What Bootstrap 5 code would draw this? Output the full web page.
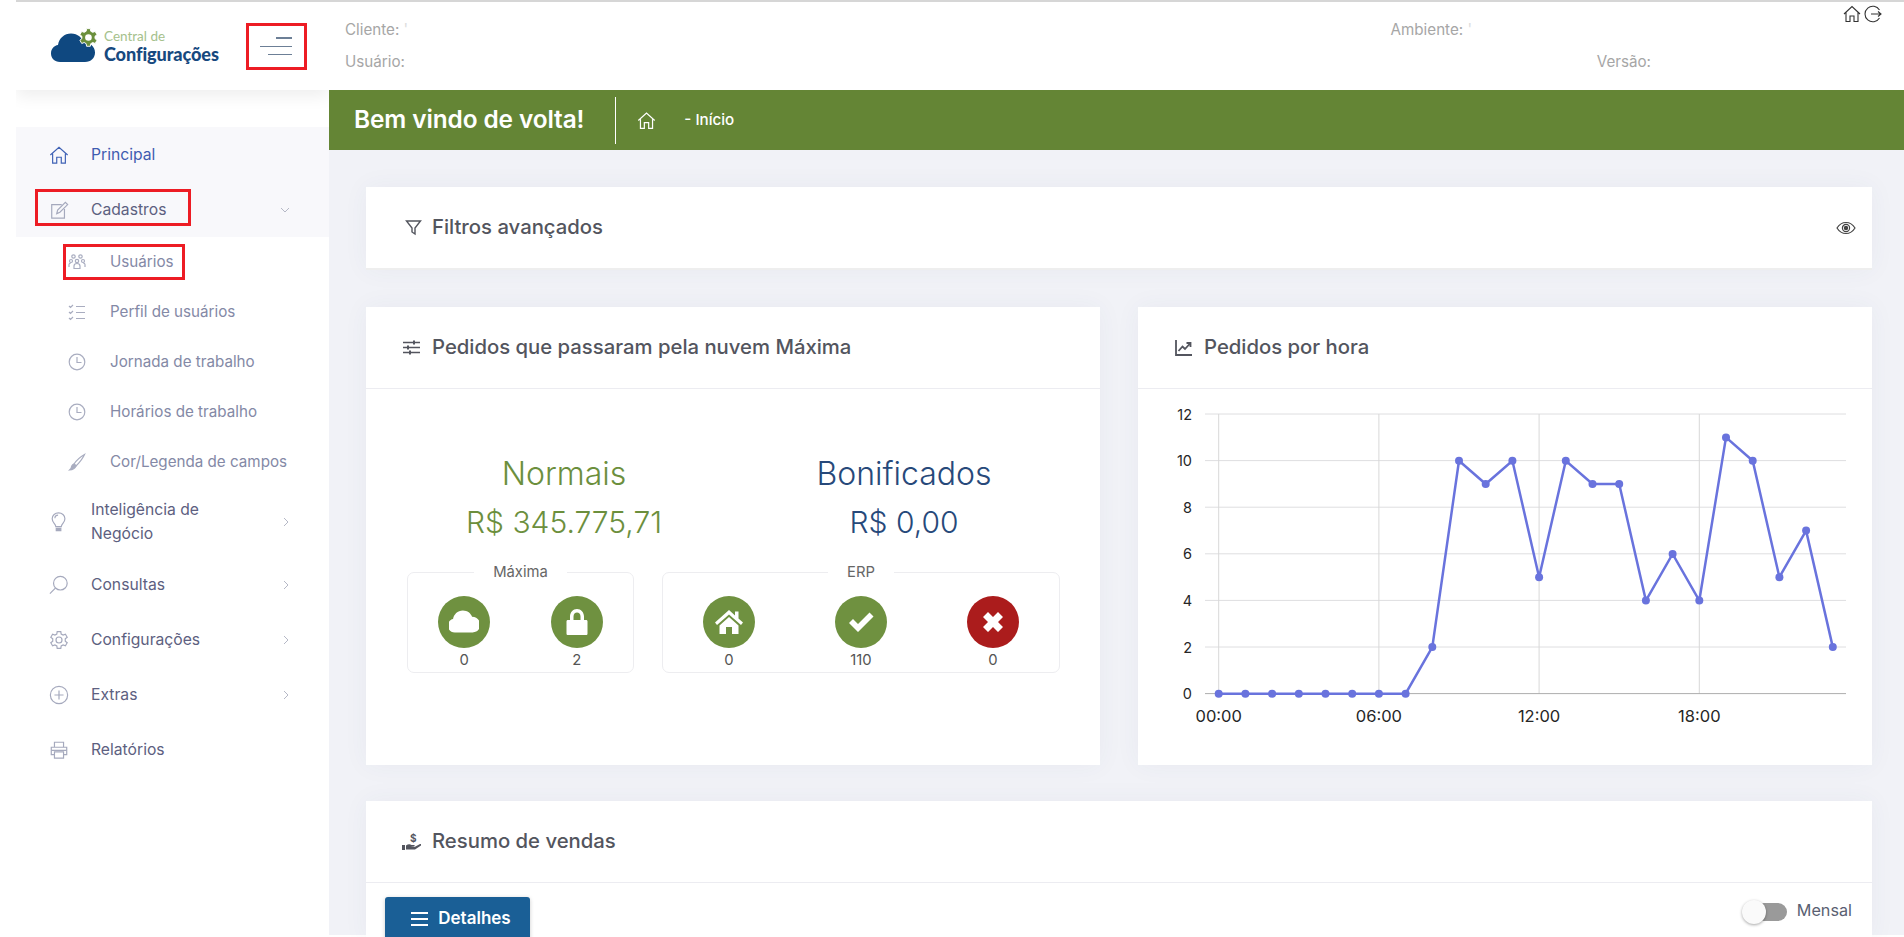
<!DOCTYPE html>
<html lang="pt-BR">
<head>
<meta charset="utf-8">
<title>Central de Configurações</title>
<link href="https://cdn.jsdelivr.net/npm/bootstrap@5.3.0/dist/css/bootstrap.min.css" rel="stylesheet">
<script src="https://cdn.jsdelivr.net/npm/bootstrap@5.3.0/dist/js/bootstrap.bundle.min.js"></script>
<style>
html,body{height:937px;overflow:hidden;background:#fff;font-family:"Inter","Noto Sans",sans-serif;}
.app-root{margin-left:16px;border-top:2px solid #d6d6d6;height:935px;}
.side{width:313px;flex:none;background:#fff;overflow:hidden;}
.logo-head{height:88px;flex:none;padding-left:35px;padding-right:22px;box-shadow:0 6px 16px rgba(0,0,0,.07);position:relative;}
.logo-txt{margin-left:5px;line-height:1;margin-top:1px;}
.logo-a{font-family:"Lato",sans-serif;font-size:13.5px;color:#a5c18c;display:block;margin-bottom:2px;}
.logo-b{font-family:"Lato",sans-serif;font-weight:900;font-size:18.1px;color:#17497f;display:block;letter-spacing:-.1px;}
.burger{width:61px;height:47px;border:3px solid #ed1c24;background:#fff;padding:0 12px 0 0;border-radius:0;gap:7px;}
.burger i{display:block;height:1px;background:#6c7f96;}
.burger i:nth-child(1){width:16px;height:2px;}
.burger i:nth-child(2){width:32px;}
.burger i:nth-child(3){width:24px;}
.menu-wrap{padding-top:37px;}
.menu-active{background:#f8f8fb;}
.m-link{display:flex;align-items:center;height:55px;padding:0 39px 0 33px;color:#5d6080;font-size:15.7px;line-height:24px;text-decoration:none;position:relative;}
.m-link svg.ic{width:20px;height:20px;flex:none;margin-right:22px;fill:none;stroke:#a5a9bd;stroke-width:1.3;}
.m-link.on{color:#3f5cb0;}
.m-link.on svg.ic{stroke:#3f62b5;}
.m-link.tall{height:70.5px;}
.chev{margin-left:auto;flex:none;width:8px;height:10px;fill:none;stroke:#b5b8c6;stroke-width:1;}
.chev.down{width:10px;height:8px;margin-right:0;}
.m-sub{display:flex;align-items:center;height:50px;padding-left:52px;color:#8489a6;font-size:15.2px;text-decoration:none;position:relative;}
.m-sub svg{width:18px;height:18px;flex:none;margin-right:24px;fill:none;stroke:#a9adc0;stroke-width:1.2;}
.mark-a::after,.mark-b::after{content:"";position:absolute;border:3px solid #ed1c24;pointer-events:none;}
.mark-a::after{left:19px;top:7px;width:156px;height:37px;}
.mark-b::after{left:47px;top:7px;width:122px;height:36px;}
.main-col{flex:1 1 auto;min-width:0;background:#f1f2f7;}
.top-info{height:88px;flex:none;background:#fff;color:#a6a6a6;font-size:15.2px;}
.info-rows{padding-left:16px;flex:1 1 auto;}
.info-line.first{padding-top:17px;height:49px;padding-right:371px;}
.info-line.second{height:33px;padding-right:192px;}
.tick{color:#ddd;}
.top-icons{width:61px;padding-top:3px;gap:3px;flex:none;}
.top-icons svg{width:18px;height:18px;fill:none;stroke:#333;stroke-width:1.1;}
.green-bar{height:60px;flex:none;background:#648535;color:#fff;padding-left:25px;}
.green-bar h1{font-size:24.4px;font-weight:600;margin:0;letter-spacing:-.1px;}
.bar-div{width:1px;height:47px;background:#fff;margin:0 21px 0 31px;}
.bar-home{width:19px;height:19px;fill:none;stroke:#fff;stroke-width:1.4;margin-right:28px;}
.crumb{font-size:15.2px;font-weight:500;}
.content-area{padding:37px 32px 0 37px;flex:none;}
.panel{border:0;border-radius:0;box-shadow:0 0 24px rgba(60,70,110,.05);background:#fff;}
.panel-head{display:flex;align-items:center;background:#fff;border-bottom:1px solid #ececf1;border-radius:0!important;padding:0 36px;height:82px;color:#53555e;font-size:20.3px;font-weight:500;}
.panel-head svg.h-ic{width:19px;height:19px;flex:none;margin-right:11px;fill:none;stroke:#53555e;stroke-width:1.4;}
.filter-panel{height:83px;margin-bottom:37px;border-bottom:2px solid #eee;}
.filter-panel .panel-head{height:81px;border:0;padding:0 16px 0 38px;}
.filter-panel .h-ic{margin-right:9px!important;}
.filter-panel .eye{width:20px;height:14px;margin-left:auto;fill:none;stroke:#444;stroke-width:1.2;}
.duo{display:grid;grid-template-columns:734px 734px;column-gap:38px;margin-bottom:36px;}
.duo>.panel{height:458px;}
.amount-row{padding:61px 26px 0 28px;}
.amount-row>div{width:50%;text-align:center;font-weight:300;}
.a-title{font-size:32px;line-height:48px;font-weight:300;}
.a-value{font-size:30px;line-height:49px;font-weight:300;}
.c-green{color:#6c8f3d;}
.c-blue{color:#27497a;}
.box-row{padding:0 40px 0 41px;gap:28px;margin-top:15px;}
.box-set{border:1px solid #ededf0;border-radius:7px;margin:0;padding:0 0 2px;min-width:0;}
.box-set legend{float:none;width:auto;margin:0 auto;padding:0 19px;font-size:14.8px;line-height:20px;color:#666;}
.s-max{width:227px;}
.s-erp{width:398px;}
.stat{flex:1 1 0;text-align:center;font-size:14.8px;line-height:20px;color:#555;padding-top:14px;}
.dot{width:52px;height:52px;border-radius:50%;background:#6f9140;margin:0 auto 2px;}
.dot.red{background:#ab1c1c;}
.dot svg{width:30px;height:30px;fill:#fff;}
.chart{display:block;width:734px;height:375px;}
.chart text{font-family:"Inter",sans-serif;font-size:14.5px;fill:#262626;}
.chart .x-lab text{font-size:16.5px;}
.sale-panel{height:140px;flex:none;}
.btn-det{background:#1a5f96;color:#fff;border:0;border-radius:3px;width:145px;height:44px;padding:0 0 0 7px;font-weight:600;font-size:17px;box-shadow:0 1px 4px rgba(0,0,0,.2);}
.btn-det:hover{background:#1a5f96;color:#fff;}
.btn-det svg{width:17px;height:14px;margin-right:10px;fill:#fff;}
.sale-tools{padding:14px 20px 0 19px;}
.tog{width:45px;height:24px;position:relative;flex:none;margin-top:3px;}
.tog::before{content:"";position:absolute;left:13px;top:3px;width:32px;height:18px;border-radius:9px;background:#9a9a9a;}
.tog::after{content:"";position:absolute;left:0;top:0;width:24px;height:24px;border-radius:50%;background:#fafafa;box-shadow:0 1px 3px rgba(0,0,0,.35);}
.tog-txt{font-size:16.2px;color:#5a5f72;margin-left:10px;}
</style>
</head>
<body>
<div class="app-root d-flex">
  <aside class="side d-flex flex-column">
    <div class="logo-head d-flex align-items-center">
      <svg width="48" height="38" viewBox="0 0 48 38" class="flex-none">
        <path d="M9 35C3.500 35 0 31 0 26.500C0 22 3 18.500 7 18C8 11 13.500 6.500 20 6.500C27 6.500 31 11 33 15.500C39 15.500 44 19.500 44 25.500C44 31 40 35 34 35Z" fill="#0f4880"/>
        <g transform="translate(27,0) scale(.95)">
          <polygon fill="#6b8f3c" stroke="#fff" stroke-width="1" points="8.600,4.420 9.020,1.710 12.980,1.710 13.400,4.420 15.500,5.640 18.060,4.640 20.030,8.060 17.890,9.780 17.890,12.220 20.030,13.940 18.060,17.360 15.500,16.360 13.400,17.580 12.980,20.290 9.020,20.290 8.600,17.580 6.500,16.360 3.940,17.360 1.970,13.940 4.110,12.220 4.110,9.780 1.970,8.060 3.940,4.640 6.500,5.640"/>
          <circle cx="11" cy="11" r="3.500" fill="#fff"/>
        </g>
      </svg>
      <div class="logo-txt"><span class="logo-a">Central de</span><span class="logo-b">Configurações</span></div>
      <button class="burger btn d-flex flex-column align-items-end justify-content-center ms-auto" type="button" aria-label="Menu"><i></i><i></i><i></i></button>
    </div>
    <nav class="menu-wrap">
      <div class="menu-active">
        <a class="m-link on" href="#">
          <svg class="ic" viewBox="0 0 22 22"><path d="M1.500 11L11 2.500L20.500 11M4 9.500V20H8.500V13.500H13.500V20H18V9.500"/></svg>Principal</a>
        <a class="m-link mark-a" href="#">
          <svg class="ic" viewBox="0 0 22 22"><path d="M14 5H3V20H17V10"/><path d="M8.500 15L9.500 11L18 2.500L20.500 5L12 13.500Z"/></svg>Cadastros
          <svg class="chev down" viewBox="0 0 10 8"><path d="M1 2L5 6L9 2"/></svg></a>
      </div>
      <a class="m-sub mark-b" href="#">
        <svg viewBox="0 0 18 18"><circle cx="5.500" cy="3.500" r="1.700"/><circle cx="12.500" cy="3.500" r="1.700"/><circle cx="3" cy="8" r="1.500"/><circle cx="9" cy="8" r="1.700"/><circle cx="15" cy="8" r="1.500"/><path d="M1 14V11.500C1 10.500 2 10 3 10M17 14V11.500C17 10.500 16 10 15 10M6 15.500V13C6 11.500 7.500 10.500 9 10.500C10.500 10.500 12 11.500 12 13V15.500Z"/></svg>Usuários</a>
      <a class="m-sub" href="#">
        <svg viewBox="0 0 18 18"><path d="M1 3L2.500 4.500L5 2M1 9L2.500 10.500L5 8M1 15L2.500 16.500L5 14M8 3.500H17M8 9.500H17M8 15.500H17"/></svg>Perfil de usuários</a>
      <a class="m-sub" href="#">
        <svg viewBox="0 0 18 18"><circle cx="9" cy="9" r="7.800"/><path d="M9 4V9.500H13.500"/></svg>Jornada de trabalho</a>
      <a class="m-sub" href="#">
        <svg viewBox="0 0 18 18"><circle cx="9" cy="9" r="7.800"/><path d="M9 4V9.500H13.500"/></svg>Horários de trabalho</a>
      <a class="m-sub" href="#">
        <svg viewBox="0 0 18 18"><path d="M16.500 1.500C13 3.500 8 8 6 11L8 13C11 10 15 5 16.500 1.500Z"/><path d="M6 11C4 11.500 3.500 13 3 15.500L1.500 17C4.500 16.800 7 15.500 8 13Z" fill="#a9adc0"/></svg>Cor/Legenda de campos</a>
      <a class="m-link tall" href="#">
        <svg class="ic" viewBox="0 0 22 22"><path d="M7.500 16C7 13 3.500 11.500 3.500 7.500C3.500 3.500 6.800 1 10.500 1C14.200 1 17.500 3.500 17.500 7.500C17.500 11.500 14 13 13.500 16Z"/><path d="M6.500 7C6.500 5 8 3.500 10 3.500"/><path d="M8 18H13V20.500H8Z" fill="#a5a9bd"/></svg>
        <span>Inteligência de<br>Negócio</span>
        <svg class="chev" viewBox="0 0 8 10"><path d="M2 1L6 5L2 9"/></svg></a>
      <a class="m-link" href="#">
        <svg class="ic" viewBox="0 0 22 22"><circle cx="12.500" cy="9" r="7.500"/><path d="M7 14.500L1 20.500"/></svg>Consultas
        <svg class="chev" viewBox="0 0 8 10"><path d="M2 1L6 5L2 9"/></svg></a>
      <a class="m-link" href="#">
        <svg class="ic" viewBox="0 0 22 22"><polygon points="8.600,4.420 9.020,1.710 12.980,1.710 13.400,4.420 15.500,5.640 18.060,4.640 20.030,8.060 17.890,9.780 17.890,12.220 20.030,13.940 18.060,17.360 15.500,16.360 13.400,17.580 12.980,20.290 9.020,20.290 8.600,17.580 6.500,16.360 3.940,17.360 1.970,13.940 4.110,12.220 4.110,9.780 1.970,8.060 3.940,4.640 6.500,5.640"/><circle cx="11" cy="11" r="3.300"/></svg>Configurações
        <svg class="chev" viewBox="0 0 8 10"><path d="M2 1L6 5L2 9"/></svg></a>
      <a class="m-link" href="#">
        <svg class="ic" viewBox="0 0 22 22"><circle cx="11" cy="11" r="9.500"/><path d="M11 6V16M6 11H16"/></svg>Extras
        <svg class="chev" viewBox="0 0 8 10"><path d="M2 1L6 5L2 9"/></svg></a>
      <a class="m-link" href="#">
        <svg class="ic" viewBox="0 0 22 22"><path d="M6 8V2.500H16V8M6 16H2.500V8H19.500V16H16"/><path d="M6 13H16V20H6ZM2.500 11.500H19.500"/></svg>Relatórios</a>
    </nav>
  </aside>

  <div class="main-col d-flex flex-column">
    <header class="top-info d-flex">
      <div class="info-rows">
        <div class="info-line first d-flex justify-content-between"><span>Cliente: <span class="tick">'</span></span><span>Ambiente: <span class="tick">'</span></span></div>
        <div class="info-line second d-flex justify-content-between"><span>Usuário:</span><span>Versão:</span></div>
      </div>
      <div class="top-icons d-flex">
        <svg viewBox="0 0 18 18"><path d="M1 9L9 1.500L17 9M3 7.500V16.500H7V11H11V16.500H15V7.500"/></svg>
        <svg viewBox="0 0 18 18"><path d="M15.500 5A7.800 7.800 0 1 0 15.500 13M7 9H17M14 6.500L17 9L14 11.500"/></svg>
      </div>
    </header>
    <div class="green-bar d-flex align-items-center">
      <h1>Bem vindo de volta!</h1>
      <span class="bar-div"></span>
      <svg class="bar-home" viewBox="0 0 22 22"><path d="M1.500 11L11 2.500L20.500 11M4 9.500V20H8.500V13.500H13.500V20H18V9.500"/></svg>
      <span class="crumb">- Início</span>
    </div>
    <div class="content-area">
      <div class="card panel filter-panel">
        <div class="panel-head">
          <svg class="h-ic" viewBox="0 0 19 19"><path d="M2.500 3H16.500L11 10V16L8 14V10Z"/></svg>Filtros avançados
          <svg class="eye" viewBox="0 0 20 14"><path d="M1 7C3.500 3 6.500 1.500 10 1.500C13.500 1.500 16.500 3 19 7C16.500 11 13.500 12.500 10 12.500C6.500 12.500 3.500 11 1 7Z"/><circle cx="10" cy="7" r="3.600"/><circle cx="10" cy="7" r="1.600" fill="#444"/></svg>
        </div>
      </div>

      <div class="duo">
        <div class="card panel">
          <div class="panel-head">
            <svg class="h-ic" viewBox="0 0 19 19"><path d="M1 4.500H18M1 9.500H18M1 14.500H18" stroke-width="1.600"/><path d="M12 2.500V6.500M6 7.500V11.500M8 12.500V16.500" stroke-width="2"/></svg>Pedidos que passaram pela nuvem Máxima
          </div>
          <div class="amount-row d-flex">
            <div class="c-green"><div class="a-title">Normais</div><div class="a-value">R$ 345.775,71</div></div>
            <div class="c-blue"><div class="a-title">Bonificados</div><div class="a-value">R$ 0,00</div></div>
          </div>
          <div class="box-row d-flex">
            <fieldset class="box-set s-max">
              <legend>Máxima</legend>
              <div class="d-flex">
                <div class="stat"><div class="dot d-flex align-items-center justify-content-center"><svg viewBox="2 2 26 26"><path d="M7 24C3.500 24 1 21.500 1 18C1 15 3 13 5.500 12.500C6 8.500 9.500 5 14 5C18 5 21 7.500 22 10.500C26 10.500 29 13.500 29 17.500C29 21.500 26 24 22.500 24Z"/></svg></div>0</div>
                <div class="stat"><div class="dot d-flex align-items-center justify-content-center"><svg viewBox="0 0 30 30"><path fill-rule="evenodd" d="M8 13V9.500C8 5.500 11 2 15 2C19 2 22 5.500 22 9.500V13H24C25 13 25.500 13.500 25.500 14.500V26.500C25.500 27.500 25 28 24 28H6C5 28 4.500 27.500 4.500 26.500V14.500C4.500 13.500 5 13 6 13ZM11.500 13H18.500V9.500C18.500 7 17 5.500 15 5.500C13 5.500 11.500 7 11.500 9.500Z"/></svg></div>2</div>
              </div>
            </fieldset>
            <fieldset class="box-set s-erp">
              <legend>ERP</legend>
              <div class="d-flex">
                <div class="stat"><div class="dot d-flex align-items-center justify-content-center"><svg viewBox="0 0 30 30"><path d="M15 3L1 15.500L3 18L15 7.500L27 18L29 15.500L24.500 11.500V4.500H21V8.500ZM15 10L5.500 18.500V27H12V20H18V27H24.500V18.500Z"/></svg></div>0</div>
                <div class="stat"><div class="dot d-flex align-items-center justify-content-center"><svg viewBox="0 0 30 30"><path d="M3 16L7 12L12 17L23.500 5.500L27.500 9.500L12 25Z"/></svg></div>110</div>
                <div class="stat"><div class="dot red d-flex align-items-center justify-content-center"><svg viewBox="0 0 30 30"><path d="M5 10L10 5L15 10L20 5L25 10L20 15L25 20L20 25L15 20L10 25L5 20L10 15Z"/></svg></div>0</div>
              </div>
            </fieldset>
          </div>
        </div>

        <div class="card panel">
          <div class="panel-head">
            <svg class="h-ic" viewBox="0 0 19 19"><path d="M2 2V17H18" stroke-width="1.800"/><path d="M4.500 13L8.500 8.500L11 11L16 5.500M12.500 5H16.500V9" stroke-width="1.800"/></svg>Pedidos por hora
          </div>
          <svg class="chart" viewBox="0 -1 734 375">
            <g stroke="#dedee0" stroke-width="1">
              <path d="M67 24H708M67 70.600H708M67 117.200H708M67 163.800H708M67 210.400H708M67 257H708"/>
              <path d="M80.700 24V304M240.900 24V304M401.100 24V304M561.300 24V304" stroke="#d8d8d8"/>
            </g>
            <path d="M67 303.600H708" stroke="#aeaeae" stroke-width="1"/>
            <g text-anchor="end">
              <text x="54" y="29.500">12</text><text x="54" y="76">10</text><text x="54" y="122.700">8</text><text x="54" y="169.300">6</text><text x="54" y="215.900">4</text><text x="54" y="262.500">2</text><text x="54" y="309">0</text>
            </g>
            <g text-anchor="middle" class="x-lab">
              <text x="80.700" y="331.500">00:00</text><text x="240.900" y="331.500">06:00</text><text x="401.100" y="331.500">12:00</text><text x="561.300" y="331.500">18:00</text>
            </g>
            <polyline fill="none" stroke="#6973dd" stroke-width="2.500" points="80.700,303.700 107.400,303.700 134.100,303.700 160.800,303.700 187.500,303.700 214.200,303.700 240.900,303.700 267.600,303.700 294.300,257.100 321,70.700 347.700,94 374.400,70.700 401.100,187.200 427.800,70.700 454.500,94 481.200,94 507.900,210.500 534.600,163.900 561.300,210.500 588,47.400 614.700,70.700 641.400,187.200 668.100,140.600 694.800,257.100"/>
            <g fill="#6973dd">
              <circle cx="80.700" cy="303.700" r="4"/><circle cx="107.400" cy="303.700" r="4"/><circle cx="134.100" cy="303.700" r="4"/><circle cx="160.800" cy="303.700" r="4"/><circle cx="187.500" cy="303.700" r="4"/><circle cx="214.200" cy="303.700" r="4"/><circle cx="240.900" cy="303.700" r="4"/><circle cx="267.600" cy="303.700" r="4"/><circle cx="294.300" cy="257.100" r="4"/><circle cx="321" cy="70.700" r="4"/><circle cx="347.700" cy="94" r="4"/><circle cx="374.400" cy="70.700" r="4"/><circle cx="401.100" cy="187.200" r="4"/><circle cx="427.800" cy="70.700" r="4"/><circle cx="454.500" cy="94" r="4"/><circle cx="481.200" cy="94" r="4"/><circle cx="507.900" cy="210.500" r="4"/><circle cx="534.600" cy="163.900" r="4"/><circle cx="561.300" cy="210.500" r="4"/><circle cx="588" cy="47.400" r="4"/><circle cx="614.700" cy="70.700" r="4"/><circle cx="641.400" cy="187.200" r="4"/><circle cx="668.100" cy="140.600" r="4"/><circle cx="694.800" cy="257.100" r="4"/>
            </g>
          </svg>
        </div>
      </div>

      <div class="card panel sale-panel">
        <div class="panel-head">
          <svg class="h-ic" viewBox="0 0 19 19"><path d="M0 13H3V18H0ZM4 13.500C6 12 8 12 9.500 13H12C13 13 13 14.500 12 14.500H8.500L12.500 15L18 12C19 11.500 19.500 13 19 13.500L13 17.500H4Z" fill="#53555e" stroke="none"/><text x="8" y="9.500" font-size="10" font-weight="700" fill="#53555e" stroke="none" font-family="Inter,sans-serif">$</text></svg>Resumo de vendas
        </div>
        <div class="sale-tools d-flex justify-content-between align-items-start">
          <button class="btn btn-det d-flex align-items-center justify-content-center" type="button"><svg viewBox="0 0 17 14"><path d="M0 0H17V2H0ZM0 6H17V8H0ZM0 12H17V14H0Z"/></svg>Detalhes</button>
          <div class="d-flex align-items-center"><span class="tog"></span><span class="tog-txt">Mensal</span></div>
        </div>
      </div>
    </div>
  </div>
</div>
</body>
</html>
